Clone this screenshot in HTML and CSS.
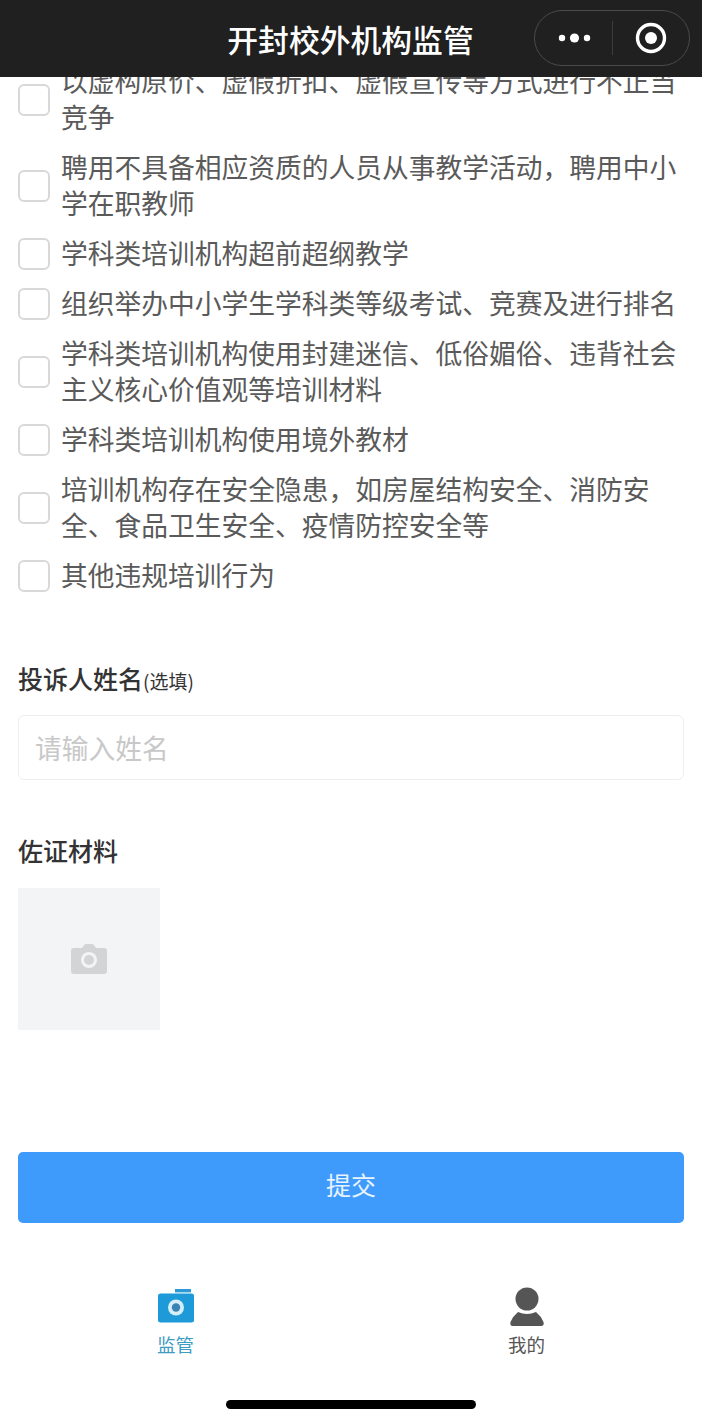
FILE: index.html
```html
<!DOCTYPE html>
<html lang="zh-CN">
<head>
  <meta charset="UTF-8" />
  <meta name="viewport" content="width=device-width, initial-scale=1" />
  <title>开封校外机构监管</title>
  <link rel="stylesheet" href="styles.css">
</head>
<body>
  <header class="navbar">
    <div class="nav-title">开封校外机构监管</div>
    <div class="capsule">
      <svg class="capsule-more" width="36" height="12" viewBox="0 0 36 12">
        <circle cx="5" cy="6" r="3.2" fill="#fff"/>
        <circle cx="17.5" cy="6" r="4.6" fill="#fff"/>
        <circle cx="30" cy="6" r="3.2" fill="#fff"/>
      </svg>
      <span class="capsule-line"></span>
      <svg class="capsule-close" width="32" height="32" viewBox="0 0 32 32">
        <circle cx="16" cy="16" r="13.5" fill="none" stroke="#fff" stroke-width="3.4"/>
        <circle cx="16" cy="16" r="6" fill="#fff"/>
      </svg>
    </div>
  </header>

  <main class="content">
    <div class="check-list">
      <label class="check-row"><span class="box"></span><span class="check-text">以虚构原价、虚假折扣、虚假宣传等方式进行不正当竞争</span></label>
      <label class="check-row"><span class="box"></span><span class="check-text">聘用不具备相应资质的人员从事教学活动，聘用中小学在职教师</span></label>
      <label class="check-row"><span class="box"></span><span class="check-text">学科类培训机构超前超纲教学</span></label>
      <label class="check-row"><span class="box"></span><span class="check-text">组织举办中小学生学科类等级考试、竞赛及进行排名</span></label>
      <label class="check-row"><span class="box"></span><span class="check-text">学科类培训机构使用封建迷信、低俗媚俗、违背社会主义核心价值观等培训材料</span></label>
      <label class="check-row"><span class="box"></span><span class="check-text">学科类培训机构使用境外教材</span></label>
      <label class="check-row"><span class="box"></span><span class="check-text">培训机构存在安全隐患，如房屋结构安全、消防安全、食品卫生安全、疫情防控安全等</span></label>
      <label class="check-row"><span class="box"></span><span class="check-text">其他违规培训行为</span></label>
    </div>

    <div class="field-label name-label">投诉人姓名<small>(选填)</small></div>
    <input class="text-input" type="text" placeholder="请输入姓名">

    <div class="field-label proof-label">佐证材料</div>
    <div class="upload">
      <svg width="36" height="30" viewBox="0 0 36 30">
        <path d="M11 4 L13 1.2 Q13.8 0 15.2 0 H20.8 Q22.2 0 23 1.2 L25 4 H33 Q36 4 36 7 V27 Q36 30 33 30 H3 Q0 30 0 27 V7 Q0 4 3 4 Z" fill="#d3d4d6"/>
        <circle cx="18" cy="16" r="8" fill="#f3f4f6"/>
        <circle cx="18" cy="16" r="5" fill="#d3d4d6"/>
      </svg>
    </div>

    <button class="submit" type="button">提交</button>
  </main>

  <nav class="tabbar">
    <div class="tab tab-active">
      <svg width="38" height="34" viewBox="0 0 38 34">
        <rect x="18" y="0" width="16" height="3.4" fill="#2a9bd6"/>
        <rect x="1" y="4.5" width="36" height="29" rx="2.5" fill="#1f9ad8"/>
        <circle cx="19" cy="18.5" r="8" fill="#d4eefa"/>
        <circle cx="19" cy="18.5" r="4.2" fill="#3a83b5"/>
      </svg>
      <span>监管</span>
    </div>
    <div class="tab">
      <svg width="38" height="40" viewBox="0 0 38 40">
        <circle cx="19" cy="12" r="11.5" fill="#555"/>
        <path d="M10 25 Q19 29 28 25 Q33 29 35.5 35 Q36.5 39 33 39 H5 Q1.500 39 2.500 35 Q5 29 10 25 Z" fill="#555"/>
      </svg>
      <span>我的</span>
    </div>
  </nav>

  <div class="home-bar"></div>
</body>
</html>
```

FILE: styles.css
```css
* {
  box-sizing: border-box;
}

body {
  margin: 0;
  height: 1424px;
  overflow: hidden;
  background: #fff;
  font-family: "Noto Sans CJK SC", "Liberation Sans", sans-serif;
  color: #5a5a5a;
}

.navbar {
  position: relative;
  z-index: 2;
  height: 77px;
  background: #202020;
  display: flex;
  align-items: center;
  justify-content: center;
}

.nav-title {
  color: #fff;
  font-size: 30.800px;
  font-weight: 500;
  line-height: 40px;
  margin-left: -1px;
}

.capsule {
  position: absolute;
  top: 10px;
  left: 534px;
  width: 156px;
  height: 56px;
  border: 1px solid #4a4a4a;
  border-radius: 28px;
  display: flex;
  align-items: center;
}

.capsule-more {
  margin-left: 22px;
}

.capsule-line {
  width: 1px;
  height: 34px;
  background: #3c3c3c;
  margin-left: 19px;
}

.capsule-close {
  margin-left: 22px;
}

.content {
  margin-top: -13px;
  padding: 0 18px;
}

.check-list {
  display: flex;
  flex-direction: column;
  gap: 14px;
}

.check-row {
  display: flex;
  align-items: center;
  gap: 11px;
  font-size: 26.750px;
  line-height: 36px;
}

/* text sits a little higher than the box centre */
.check-text {
  margin-top: -1px;
  margin-bottom: 1px;
}

.box {
  flex: none;
  width: 32px;
  height: 32px;
  background: #fff;
  border: 2px solid #d8d8d8;
  border-radius: 6px;
}

.field-label {
  font-size: 25px;
  font-weight: 500;
  line-height: 36px;
  color: #333;
}

.field-label small {
  font-size: 19px;
  font-weight: 400;
}

.name-label {
  margin-top: 66px;
}

.proof-label {
  margin-top: 52px;
}

.text-input {
  display: block;
  width: 100%;
  height: 65px;
  margin-top: 16px;
  padding: 0 16px;
  border: 1px solid #eee;
  border-radius: 6px;
  font-family: inherit;
  font-size: 26.750px;
  color: #555;
  outline: none;
}

.text-input::placeholder {
  color: #c8c8c8;
}

.upload {
  width: 142px;
  height: 142px;
  margin-top: 20px;
  background: #f3f4f6;
  display: flex;
  align-items: center;
  justify-content: center;
}

.submit {
  display: block;
  width: 100%;
  height: 71px;
  margin-top: 122px;
  padding: 0 0 8px;
  border: none;
  border-radius: 5px;
  background: #3f9bfb;
  color: #e8f3ff;
  font-family: inherit;
  font-size: 25px;
}

.tabbar {
  display: flex;
  margin-top: 61px;
}

.tab {
  flex: 1;
  height: 72px;
  display: flex;
  flex-direction: column;
  align-items: center;
  justify-content: flex-end;
  gap: 5px;
  font-size: 18.500px;
  line-height: 24px;
  color: #555;
}

.tab-active {
  color: #3d9cc6;
}

.tab-active svg {
  margin-bottom: 4px;
}

.home-bar {
  width: 250px;
  height: 9px;
  margin: 44px auto 0;
  background: #000;
  border-radius: 5px;
}
```
